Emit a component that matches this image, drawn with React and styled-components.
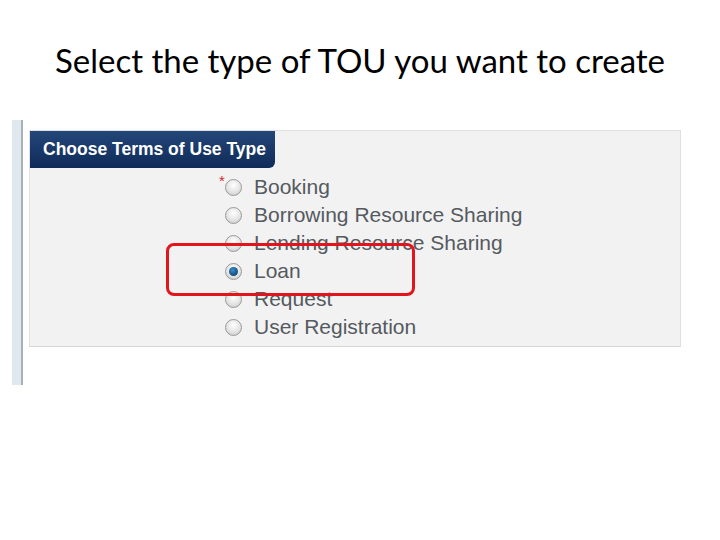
import React from 'react';
import styled, { createGlobalStyle } from 'styled-components';

const GlobalStyle = createGlobalStyle`
  html, body {
    margin: 0;
    padding: 0;
    background: #ffffff;
  }
`;

const Page = styled.div`
  width: 720px;
  height: 540px;
  overflow: hidden;
  background: #ffffff;
`;

const Title = styled.h1`
  margin: 0;
  padding-top: 41px;
  height: 78px;
  box-sizing: border-box;
  text-align: center;
  font-family: Lato, 'Open Sans', sans-serif;
  font-weight: 400;
  font-size: 33px;
  line-height: 38px;
  color: #000;
`;

const Frame = styled.div`
  display: flex;
  align-items: flex-start;
  margin-top: 42px;
  margin-left: 12px;
  height: 265px;
`;

const SideBar = styled.div`
  width: 9px;
  height: 100%;
  background: #dfe7ef;
  border-right: 2px solid #a9afb6;
`;

const Panel = styled.div`
  position: relative;
  margin-left: 6px;
  margin-top: 10px;
  width: 650px;
  height: 215px;
  background: #f2f2f2;
  border: 1px solid #e0e0e0;
  border-bottom-color: #d6d6d6;
`;

const Tab = styled.div`
  display: inline-block;
  padding: 0 9px 0 13px;
  height: 37px;
  line-height: 37px;
  background: linear-gradient(#24467a, #0f2b58);
  border-radius: 0 0 6px 0;
  color: #ffffff;
  font-family: 'Liberation Sans', Arial, sans-serif;
  font-weight: 700;
  font-size: 17.5px;
`;

const Options = styled.div`
  display: flex;
  flex-direction: column;
  padding-left: 195px;
  padding-top: 5px;
`;

const Option = styled.label`
  position: relative;
  display: flex;
  align-items: center;
  gap: 12px;
  height: 28px;
  font-family: 'Liberation Sans', Arial, sans-serif;
  font-size: 21px;
  color: #555a60;
`;

const Radio = styled.span`
  flex: none;
  width: 15px;
  height: 15px;
  border-radius: 50%;
  border: 1px solid #9a9a9a;
  background: radial-gradient(circle at 50% 35%, #ffffff 0%, #e4e4e4 55%, #c4c4c4 100%);
  display: flex;
  align-items: center;
  justify-content: center;

  &::after {
    content: '';
    display: ${p => (p.checked ? 'block' : 'none')};
    width: 9px;
    height: 9px;
    border-radius: 50%;
    background: radial-gradient(circle at 40% 35%, #3f8cc4 0%, #0f4c7e 70%, #0a3456 100%);
  }
`;

const Required = styled.span`
  position: absolute;
  left: -6px;
  top: 0px;
  color: #d9262b;
  font-size: 15px;
  line-height: 15px;
`;

const Highlight = styled.div`
  position: absolute;
  left: 136px;
  top: 112px;
  width: 243px;
  height: 47px;
  border: 3px solid #e2141c;
  border-radius: 8px;
  pointer-events: none;
`;

const types = [
  'Booking',
  'Borrowing Resource Sharing',
  'Lending Resource Sharing',
  'Loan',
  'Request',
  'User Registration',
];

export default function App() {
  return (
    <Page>
      <GlobalStyle />
      <Title>Select the type of TOU you want to create</Title>
      <Frame>
        <SideBar />
        <Panel>
          <Tab>Choose Terms of Use Type</Tab>
          <Options>
            {types.map((t, i) => (
              <Option key={t}>
                {i === 0 && <Required>*</Required>}
                <Radio checked={t === 'Loan'} />
                {t}
              </Option>
            ))}
          </Options>
          <Highlight />
        </Panel>
      </Frame>
    </Page>
  );
}
